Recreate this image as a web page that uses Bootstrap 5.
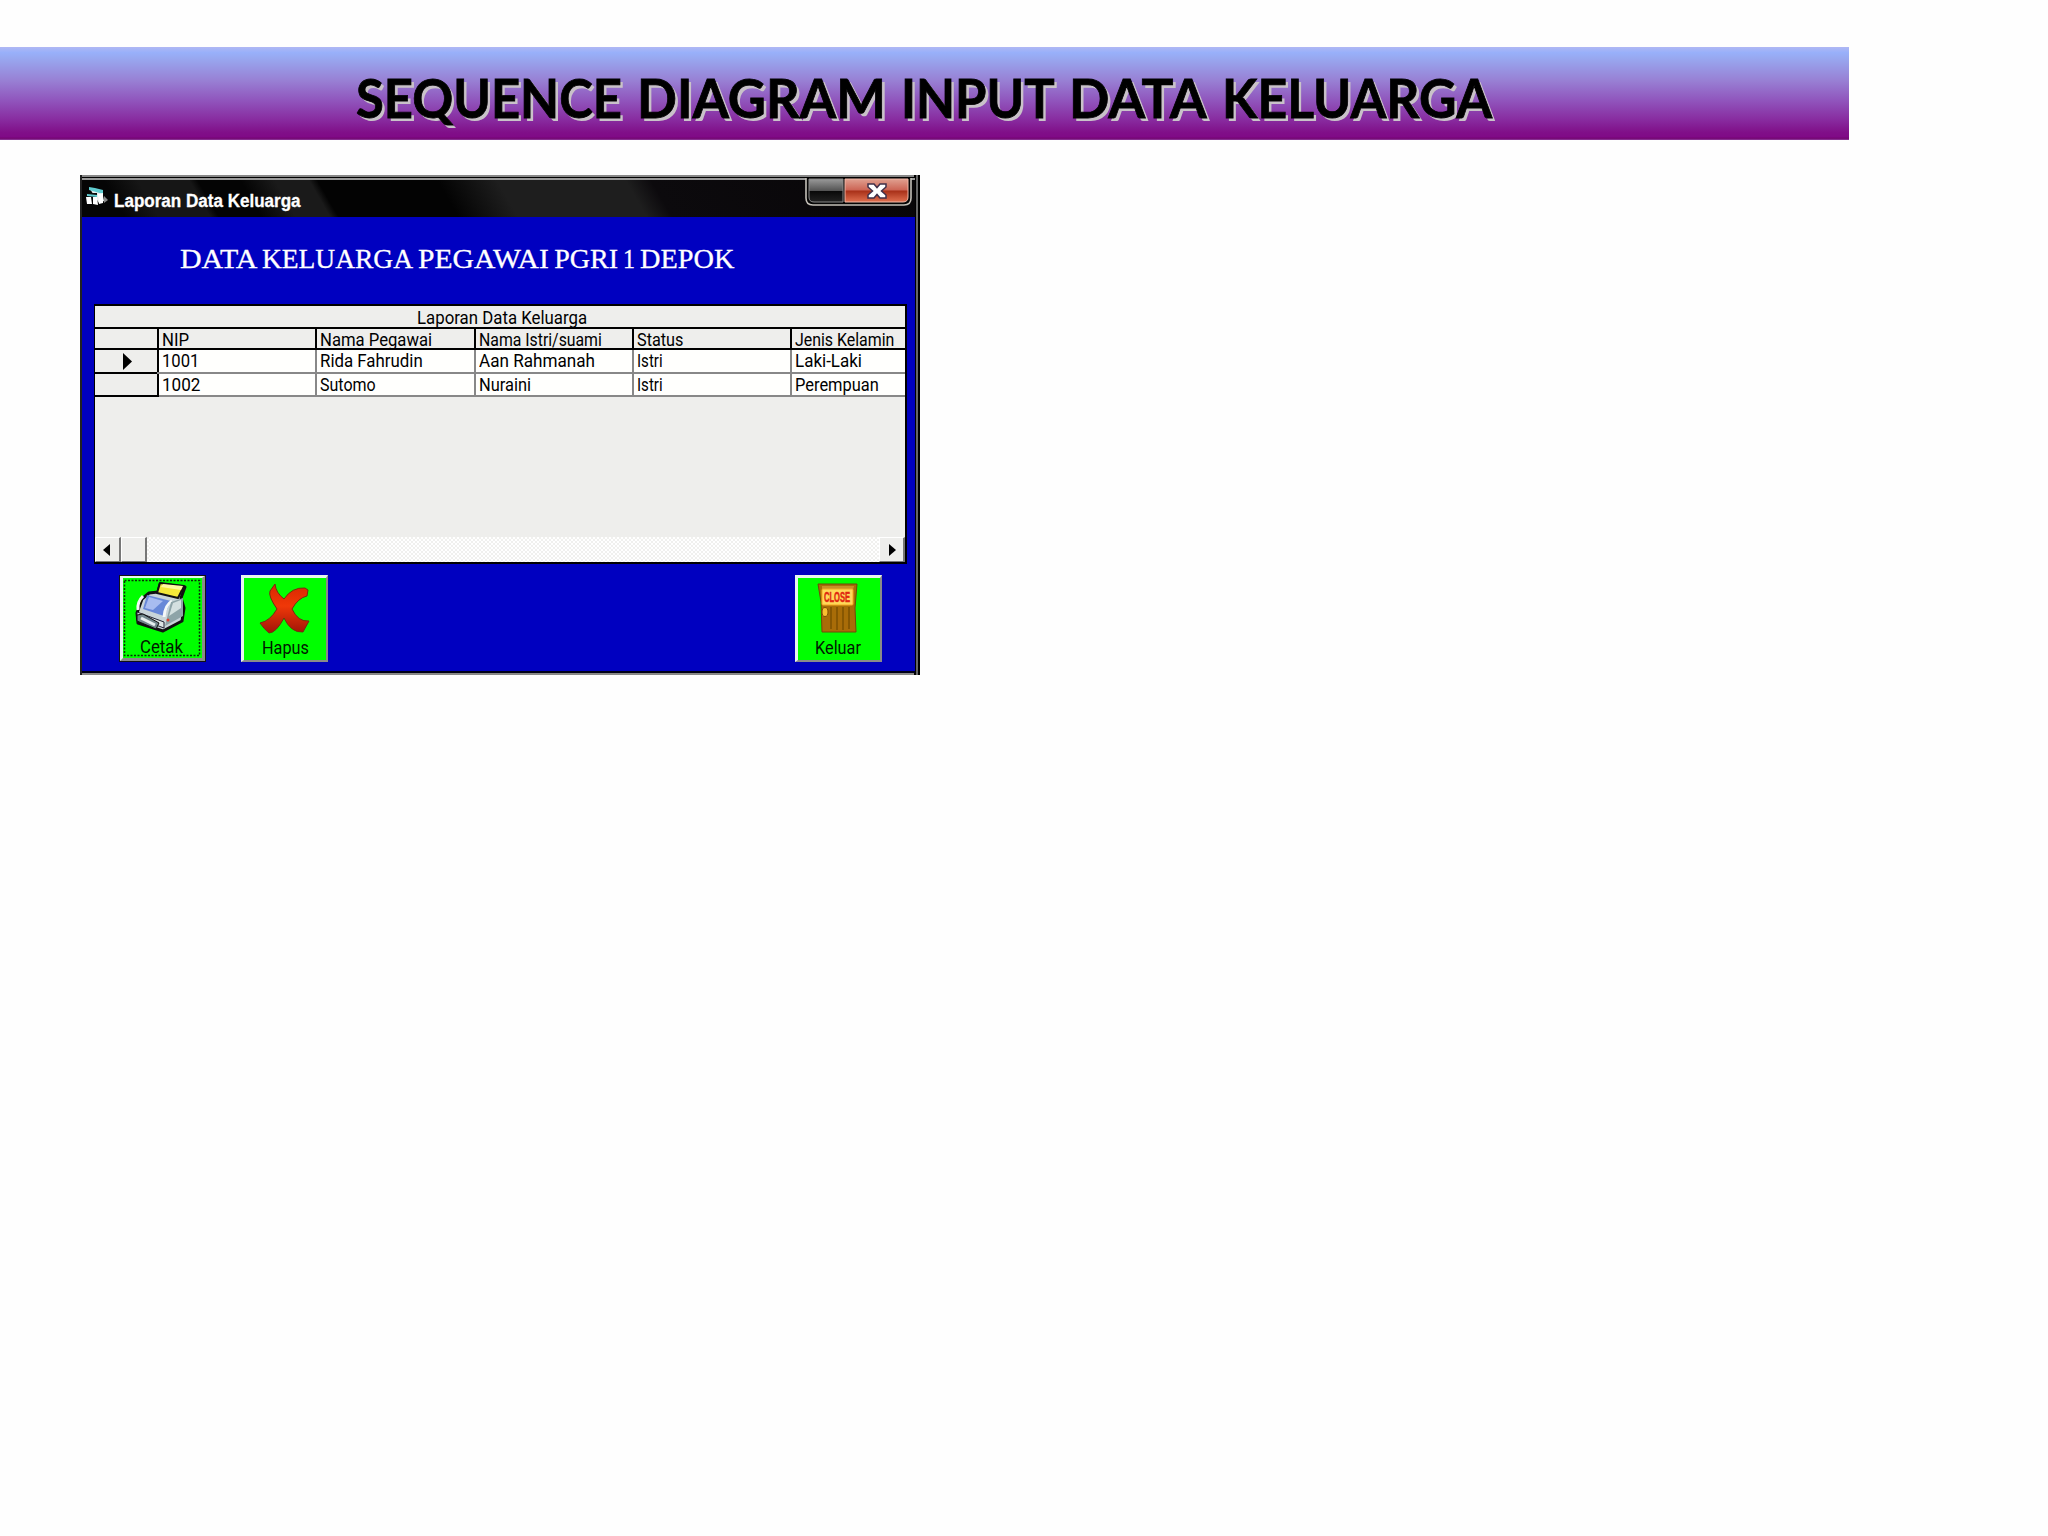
<!DOCTYPE html>
<html lang="id">
<head>
<meta charset="utf-8">
<title>Sequence Diagram Input Data Keluarga</title>
<link href="https://cdn.jsdelivr.net/npm/bootstrap@5.3.0/dist/css/bootstrap.min.css" rel="stylesheet">
<style>
body{background:#fefefe;font-family:Roboto,"Liberation Sans",sans-serif;color:#000}
.fit{display:inline-block;white-space:nowrap;transform-origin:0 50%}
.page-top{padding-top:47px}
.banner{width:1849px;height:93px;padding:3px 0 0 356px;background:linear-gradient(#b0b8f4 0,#98b0fa 6%,#98a8f0 12%,#9880d4 36%,#9054bc 58%,#882ca0 78%,#800f88 92%,#800a86 97%,#70006c 98%,#9040a0 100%)}
.banner h1{font:700 54px/96px Lato,sans-serif;text-shadow:3px 3px 0 #c9c2c9;-webkit-text-stroke:.8px #000;gap:15px}
.win{width:840px;height:500px;margin:35px 0 0 80px;background:#0000c0;border-style:solid;border-color:#777 #111 #777 #222;border-width:2px 5px 2px 2px;box-shadow:inset 0 -2px #000018}
.win-frame{border-image:linear-gradient(90deg,#222 0 2px,#888 2px 834px,#000 834px 836px,#666 836px 838px,#000 838px) 2 5 2 2}
.tbar{height:40px;border-top:1px solid #000;box-shadow:inset 0 2px #999;padding-left:4px;background:linear-gradient(60deg,#050505 0 5%,#161616 9% 15%,#040404 16% 21%,#1a1a1a 25% 29%,#030303 30% 44%,#1e1e1e 51% 66%,#0c0a0d 69%,#080608)}
.tbar-title{font:700 17.5px/22px "Liberation Sans",sans-serif;color:#fff;margin:12px 0 0 6px;-webkit-text-stroke:.3px #fff}
.tbar svg.app{margin-top:8px}
.ctl{margin:0 3px 0 0}
.heading{height:87px;padding:25px 0 0 98px;color:#fff;font:28px/34px "Liberation Serif",serif;gap:5px;-webkit-text-stroke:.3px #fff}
.gridbox{width:813px;height:260px;margin-left:12px;border:solid #000;border-width:2px 2px 2px 1px;background:#eeeeec;font-size:18px;line-height:20px}
.g-cap{height:21px;padding-left:322px;padding-top:2px}
.g-row{border-top:2px solid #000;height:21px}
.g-row>div{width:158.3px;flex:none;padding-left:3px;border-left:2px solid #000;line-height:21px;white-space:nowrap}
.g-row>div:first-child{width:62px;border:0;padding:0}
.g-row>div:last-child{flex:1 1 0}
.g-row .fit{vertical-align:top;position:relative;z-index:1}
.rec{border-color:#888;height:23px;background:#fffffd}
.rec>div{border-color:#888}
.rec>div:nth-child(2){border-color:#000}
.rec>div:first-child{background:#eeeeec;box-shadow:0 -2px #000}
.rec.first{border-color:#000;height:24px}
.g-end{height:2px;background:linear-gradient(90deg,#000 64px,#888 64px)}
.sbar{height:25px;background-color:#f8f8f6;background-image:repeating-conic-gradient(#fff 0 25%,#f0f0ee 0 50%);background-size:4px 4px}
.sb{width:26px;height:25px;background:#eeeeec;border-right:2px solid #777;border-bottom:1px solid #777;border-left:1px solid #fff;border-top:1px solid #fff}
.btns{padding:11px 33px 0 37px}
.vbtn{width:87px;height:87px;background:#0f0;border:solid;border-width:3px 2px 2px 3px;border-color:#e8f4f0 #8a8a8a #8a8a8a #e8f4f0;padding:0}
.vbtn svg{display:block}
.vbtn text.cap{font:18px Roboto,sans-serif;fill:#001800}
.vbtn.focusd{outline:1px solid #111;outline-offset:-1px;border-width:3px 4px 4px 4px}
</style>
<script src="https://cdn.jsdelivr.net/npm/bootstrap@5.3.0/dist/js/bootstrap.bundle.min.js"></script>
</head>
<body>
<div class="page-top">
<header class="banner"><h1 class="m-0 d-flex"><span class="fit" data-w="266">SEQUENCE</span><span class="fit" data-w="249">DIAGRAM</span><span class="fit" data-w="154">INPUT</span><span class="fit" data-w="138">DATA</span><span class="fit" data-w="270">KELUARGA</span></h1></header>
<main class="win win-frame">
<div class="tbar d-flex align-items-start">
<svg class="app" width="22" height="22" viewBox="0 0 22 22"><path d="M4 3l12 2 2 10-5 2z" fill="#e8eeee"/><path d="M3 1l6 1 8 2v4L3 4z" fill="#60ccd0"/><path d="M12 8l5-1v10l-4 1z" fill="#fff"/><path d="M18 10l4 4-4 3z" fill="#888"/><path d="M0 7h11v5H0z" fill="#0a0a0a"/><path d="M0 11h5l1 7H1zM7 11h4l1 8-5-1z" fill="#fff"/><path d="M1 8l10 1v2L1 10z" fill="#60ccd0"/></svg>
<div class="tbar-title"><span class="fit" data-w="187">Laporan Data Keluarga</span></div>
<svg class="ctl ms-auto" width="107" height="29" viewBox="0 0 107 29"><defs><linearGradient id="a" x2="0" y2="1"><stop stop-color="#999"/><stop offset=".5" stop-color="#555"/><stop offset=".52" stop-color="#080808"/><stop offset="1" stop-color="#222"/></linearGradient><linearGradient id="b" x2="0" y2="1"><stop stop-color="#e0a090"/><stop offset=".48" stop-color="#cc6454"/><stop offset=".52" stop-color="#a83018"/><stop offset="1" stop-color="#e07050"/></linearGradient></defs>
<path d="M1 0v20q0 7 7 7h91q7 0 7-7V0" fill="#050505" stroke="#c4c0b8" stroke-width="1.600"/><path d="M4 1h34v23H9q-5 0-5-5z" fill="url(#a)" stroke="#888"/><path d="M40 1h63v18q0 5-5 5H40z" fill="url(#b)" stroke="#f0b8a8"/><path d="M63 6h6l3 3.500 3-3.500h6v3l-4.500 4 4.500 4v3h-6l-3-3.500-3 3.500h-6v-3l4.500-4-4.500-4z" fill="#fff" stroke="#40304a" stroke-width="1.500"/></svg>
</div>
<div class="heading d-flex"><span class="fit" data-w="77">DATA</span><span class="fit" data-w="151">KELUARGA</span><span class="fit" data-w="131">PEGAWAI</span><span class="fit" data-w="64">PGRI</span><span class="fit" data-w="12">1</span><span class="fit" data-w="94">DEPOK</span></div>
<section class="gridbox d-flex flex-column">
<div class="g-cap"><span class="fit" data-w="170">Laporan Data Keluarga</span></div>
<div class="g-row d-flex"><div></div><div><span class="fit" data-w="27">NIP</span></div><div><span class="fit" data-w="112">Nama Pegawai</span></div><div><span class="fit" data-w="123">Nama Istri/suami</span></div><div><span class="fit" data-w="46">Status</span></div><div><span class="fit" data-w="99">Jenis Kelamin</span></div></div>
<div class="g-row rec first d-flex"><div><svg class="d-block" width="62" height="22"><path d="M28 3v17l9-8.500z"/></svg></div><div><span class="fit" data-w="37">1001</span></div><div><span class="fit" data-w="103">Rida Fahrudin</span></div><div><span class="fit" data-w="116">Aan Rahmanah</span></div><div><span class="fit" data-w="26">Istri</span></div><div><span class="fit" data-w="67">Laki-Laki</span></div></div>
<div class="g-row rec d-flex"><div></div><div><span class="fit" data-w="38">1002</span></div><div><span class="fit" data-w="56">Sutomo</span></div><div><span class="fit" data-w="52">Nuraini</span></div><div><span class="fit" data-w="26">Istri</span></div><div><span class="fit" data-w="84">Perempuan</span></div></div>
<div class="g-end"></div>
<div class="sbar d-flex mt-auto"><div class="sb"><svg class="d-block" width="23" height="23"><path d="M14 6v12l-7-6z"/></svg></div><div class="sb"></div><div class="sb ms-auto"><svg class="d-block" width="23" height="23"><path d="M9 6v12l7-6z"/></svg></div></div>
</section>
<div class="btns d-flex">
<button class="vbtn focusd"><svg width="79" height="80" viewBox="0 0 79 80"><rect x="1.500" y="2.500" width="75" height="75" fill="none" stroke="#063006" stroke-width="1.500" stroke-dasharray="2 1.500"/>
<g stroke="#111" stroke-width="2" stroke-linejoin="round"><path d="M14 35l5-14 7-6 9-1 2-8 25 3-4 11 3 10-2 13-19 10-25-8z" fill="#c8d4d8" stroke-width="3"/><path d="M37 5l24 3-6 12-21-5z" fill="#f4e838"/></g><path d="M40 6l20 2-2 4-20-3z" fill="#fff8a0"/><path d="M24 17l24 6-7 15-21-7z" fill="#6888d8"/><path d="M26 19l14 4-10 9-8-2z" fill="#a8bcf0"/><path d="M20 18q-6 6-5 14M49 23q-7 4-8 16" fill="none" stroke="#f4f8f8" stroke-width="3"/><path d="M48 24l12-4v18l-18 10z" fill="#8ea4a8"/><path d="M50 25l8-3v8l-12 8z" fill="#d4e0e0"/><path d="M14 34l27 10v6L14 40z" fill="#dce4e4" stroke="#223" stroke-width="1"/><path d="M14 37l6-1 16 9-3 6-19-8z" fill="#71868c" stroke="#111"/><path d="M18 40l14 7" stroke="#e8f0f0" stroke-width="3"/><circle cx="45" cy="42" r="1.500" fill="#e04030"/><text class="cap" x="17" y="75" textLength="43" lengthAdjust="spacingAndGlyphs">Cetak</text></svg></button>
<button class="vbtn" style="margin-left:35px"><svg width="82" height="82" viewBox="0 0 82 82"><defs><linearGradient id="x" x2="0" y2="1"><stop stop-color="#d82800"/><stop offset=".45" stop-color="#f03808"/><stop offset="1" stop-color="#a01408"/></linearGradient></defs><path d="M31 6q1 9 9 15Q48 9 61 10l3 2-1 6q-9 2-15 13 6 13 17 12l-6 11q-12 1-19-14-8 15-15 15-5-4-9-10 10-2 17-14-9-13-7-18z" fill="url(#x)" stroke="#703010"/><text class="cap" x="18" y="76" textLength="47" lengthAdjust="spacingAndGlyphs">Hapus</text></svg></button>
<button class="vbtn ms-auto"><svg width="82" height="82" viewBox="0 0 82 82"><path d="M20 6h39l-2 24 1 24H24l-1-30z" fill="#a86c08" stroke="#704808"/><path d="M24 8h32l-1 4H24z" fill="#c89028"/><path d="M33 29v22M39 29v23M45 29v23M51 29v22" stroke="#7c5000" stroke-width="1.500"/><rect x="24" y="11" width="31" height="16" rx="1" fill="#ffd858" stroke="#f4a820"/><text x="26" y="24" font-family="Liberation Sans" font-weight="700" font-size="14" fill="#e02810" stroke="#e02810" stroke-width=".5" textLength="26" lengthAdjust="spacingAndGlyphs">CLOSE</text><ellipse cx="27" cy="34" rx="3" ry="4.500" fill="#f8c030" stroke="#804c00"/><text class="cap" x="17" y="76" textLength="46" lengthAdjust="spacingAndGlyphs">Keluar</text></svg></button>
</div>
</main>
</div>
<script>
// Squeeze or stretch each label to its bitmap-font width
document.querySelectorAll('.fit').forEach(e=>{const w=e.dataset.w;e.style.transform='scaleX('+(w/e.offsetWidth)+')';if(e.parentNode.classList.contains('d-flex'))e.style.marginRight=(w-e.offsetWidth)+'px'})
</script>
</body>
</html>
